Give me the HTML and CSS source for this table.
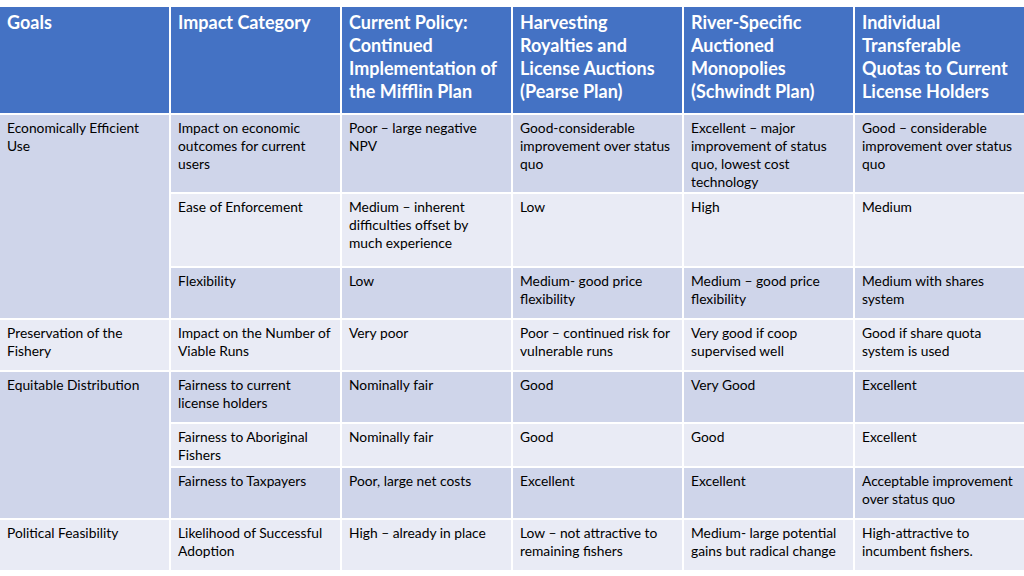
FILE: index.html
```html
<!DOCTYPE html>
<html lang="en">
<head>
<meta charset="utf-8">
<title>Fishery policy comparison</title>
<link rel="stylesheet" href="styles.css">
</head>
<body>
<div class="page">
  <div class="table">
    <div class="cell head">Goals</div>
    <div class="cell head">Impact Category</div>
    <div class="cell head">Current Policy:<br>Continued<br>Implementation of<br>the Mifflin Plan</div>
    <div class="cell head">Harvesting<br>Royalties and<br>License Auctions<br>(Pearse Plan)</div>
    <div class="cell head">River-Specific<br>Auctioned<br>Monopolies<br>(Schwindt Plan)</div>
    <div class="cell head">Individual<br>Transferable<br>Quotas to Current<br>License Holders</div>

    <div class="cell dark goal span3">Economically Efficient<br>Use</div>
    <div class="cell dark">Impact on economic<br>outcomes for current<br>users</div>
    <div class="cell dark">Poor – large negative<br>NPV</div>
    <div class="cell dark">Good-considerable<br>improvement over status<br>quo</div>
    <div class="cell dark">Excellent – major<br>improvement of status<br>quo, lowest cost<br>technology</div>
    <div class="cell dark">Good – considerable<br>improvement over status<br>quo</div>

    <div class="cell light">Ease of Enforcement</div>
    <div class="cell light">Medium – inherent<br>difficulties offset by<br>much experience</div>
    <div class="cell light">Low</div>
    <div class="cell light">High</div>
    <div class="cell light">Medium</div>

    <div class="cell dark">Flexibility</div>
    <div class="cell dark">Low</div>
    <div class="cell dark">Medium- good price<br>flexibility</div>
    <div class="cell dark">Medium – good price<br>flexibility</div>
    <div class="cell dark">Medium with shares<br>system</div>

    <div class="cell light">Preservation of the<br>Fishery</div>
    <div class="cell light">Impact on the Number of<br>Viable Runs</div>
    <div class="cell light">Very poor</div>
    <div class="cell light">Poor – continued risk for<br>vulnerable runs</div>
    <div class="cell light">Very good if coop<br>supervised well</div>
    <div class="cell light">Good if share quota<br>system is used</div>

    <div class="cell dark goal span3">Equitable Distribution</div>
    <div class="cell dark">Fairness to current<br>license holders</div>
    <div class="cell dark">Nominally fair</div>
    <div class="cell dark">Good</div>
    <div class="cell dark">Very Good</div>
    <div class="cell dark">Excellent</div>

    <div class="cell light">Fairness to Aboriginal<br>Fishers</div>
    <div class="cell light">Nominally fair</div>
    <div class="cell light">Good</div>
    <div class="cell light">Good</div>
    <div class="cell light">Excellent</div>

    <div class="cell dark">Fairness to Taxpayers</div>
    <div class="cell dark">Poor, large net costs</div>
    <div class="cell dark">Excellent</div>
    <div class="cell dark">Excellent</div>
    <div class="cell dark">Acceptable improvement<br>over status quo</div>

    <div class="cell light">Political Feasibility</div>
    <div class="cell light">Likelihood of Successful<br>Adoption</div>
    <div class="cell light">High – already in place</div>
    <div class="cell light">Low – not attractive to<br>remaining fishers</div>
    <div class="cell light">Medium- large potential<br>gains but radical change</div>
    <div class="cell light">High-attractive to<br>incumbent fishers.</div>
  </div>
</div>
</body>
</html>
```

FILE: styles.css
```css
html, body {
  margin: 0;
  padding: 0;
  background: #ffffff;
}

.page {
  width: 1024px;
  height: 576px;
  padding-top: 7px;
  box-sizing: border-box;
  font-family: Lato, "Liberation Sans", sans-serif;
}

.table {
  display: grid;
  grid-template-columns: repeat(6, 1fr);
  grid-template-rows: 106px 77px 72px 50px 50px 50px 42px 50px 50px;
  gap: 2px;
}

.cell {
  padding: 4px 4px 0 7px;
  font-size: 13.8px;
  line-height: 18px;
  color: #000000;
  white-space: nowrap;
  overflow: hidden;
}

.head {
  background: #4472c4;
  color: #ffffff;
  font-weight: bold;
  font-size: 18px;
  line-height: 23px;
  padding-top: 4px;
}

.dark {
  background: #cfd5ea;
}

.light {
  background: #e9ebf5;
}

.span3 {
  grid-row: span 3;
}
```
